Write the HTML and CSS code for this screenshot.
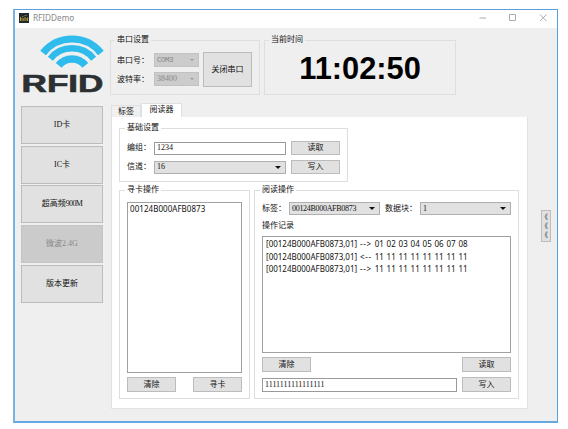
FILE: index.html
```html
<!DOCTYPE html>
<html lang="zh-CN">
<head>
<meta charset="utf-8">
<title>RFIDDemo</title>
<link rel="stylesheet" href="styles.css">
</head>
<body>
<div class="window">
  <header class="titlebar">
    <svg class="app-icon" width="10" height="10" viewBox="0 0 10 10"><rect width="10" height="10" fill="#24292c"/><path d="M1.5 8V4M3 8V5M6 8V4M8.5 8V4.5" stroke="#c9a727" stroke-width=".9"/><path d="M3 3.5h1.5M5.5 2.5h2M4.5 5v3M7.3 5v2.5" stroke="#7f8c78" stroke-width=".8"/></svg>
    <span class="caption">RFIDDemo</span>
    <svg class="controls" width="72" height="10" viewBox="0 0 72 10" fill="none" stroke="#aaa"><path d="M3.500 5H10M33.500 1.500h6v6h-6zM64 1.500l6.500 6.500M70.500 1.500L64 8"/></svg>
  </header>
  <div class="body">
    <aside class="sidebar">
      <svg class="logo" width="84" height="60" viewBox="20 34 84 60">
        <g fill="none" stroke="#2fbcec">
          <path d="M43.100 52.900A37 37 0 0 1 100.900 52.900" stroke-width="7.200"/>
          <path d="M50.400 58.700A27.700 27.700 0 0 1 93.600 58.700" stroke-width="6.500"/>
          <path d="M58.700 65.400A17 17 0 0 1 85.300 65.400" stroke-width="7.500"/>
        </g>
        <text x="21.500" y="91.700" textLength="82" lengthAdjust="spacingAndGlyphs">RFID</text>
      </svg>
      <nav class="menu">
        <button><span class="m">ID</span>卡</button>
        <button><span class="m">IC</span>卡</button>
        <button>超高频<span class="m tight">900M</span></button>
        <button class="active"><span>微波<span class="m">2.4G</span></span></button>
        <button>版本更新</button>
      </nav>
    </aside>
    <main class="content">
      <div class="top">
        <section class="group serial">
          <h2>串口设置</h2>
          <div class="serial-fields">
            <label>串口号：</label><div class="combo off"><span class="m mono">COM3</span><i></i></div>
            <label>波特率：</label><div class="combo off"><span class="m">38400</span><i></i></div>
          </div>
          <button class="close-port">关闭串口</button>
        </section>
        <section class="group clock">
          <h2>当前时间</h2>
          <time>11:02:50</time>
        </section>
      </div>
      <div class="tabs"><span class="tab">标签</span><span class="tab on">阅读器</span></div>
      <div class="page">
        <section class="group basic">
          <h2>基础设置</h2>
          <label>编组：</label><div class="input"><span class="m">1234</span></div><button>读取</button>
          <label>信道：</label><div class="combo"><span class="m">16</span><i></i></div><button>写入</button>
        </section>
        <div class="panels">
          <section class="group find">
            <h2>寻卡操作</h2>
            <div class="list"><p class="id">00124B000AFB0873</p></div>
            <div class="row"><button>清除</button><button>寻卡</button></div>
          </section>
          <section class="group reader">
            <h2>阅读操作</h2>
            <div class="pick">
              <label>标签：</label><div class="combo"><span class="m serial-id">00124B000AFB0873</span><i></i></div>
              <label>数据块：</label><div class="combo"><span class="m">1</span><i></i></div>
            </div>
            <h3>操作记录</h3>
            <div class="list log">
              <p>[00124B000AFB0873,01] <b>--&gt;</b> 01 02 03 04 05 06 07 08</p>
              <p>[00124B000AFB0873,01] <b>&lt;--</b> 11 11 11 11 11 11 11 11</p>
              <p>[00124B000AFB0873,01] <b>--&gt;</b> 11 11 11 11 11 11 11 11</p>
            </div>
            <div class="row"><button>清除</button><button>读取</button></div>
            <div class="send"><div class="input"><span class="m">1111111111111111</span></div><button>写入</button></div>
          </section>
        </div>
      </div>
    </main>
    <button class="expander"><span>《</span><span>《</span><span>《</span></button>
  </div>
</div>
</body>
</html>
```
FILE: styles.css
```css
* { box-sizing: border-box; }
body {
  margin: 0;
  padding: 9px 0 0 13px;
  background: #fff;
  color: #111;
  font: 8px/10px "Liberation Serif", "Noto Sans CJK SC", serif;
  overflow: hidden;
}
h2, h3, p { margin: 0; font-size: 8px; font-weight: 400; }
button {
  font: inherit;
  color: inherit;
  padding: 0;
  border: 1px solid #bcbcbc;
  background: #e1e1e1;
  white-space: nowrap;
}
label, .m { white-space: nowrap; }
.tight { letter-spacing: -.6px; }
.serial-id { letter-spacing: -.3px; }
.mono { font-family: "Liberation Mono", monospace; font-size: 7.500px; letter-spacing: -.5px; }

.window {
  width: 545px;
  height: 414px;
  border: 1px solid #5b9fdc;
  border-left: 2px solid #78b2e4;
  border-bottom: 2px solid #66a8df;
  background: #efefef;
}
.titlebar { display: flex; align-items: center; height: 18px; padding: 0 9px 2px 4px; background: #fff; }
.caption { margin-left: 4px; font: 8.200px/12px "Noto Sans", sans-serif; color: #888; }
.controls { margin-left: auto; }
.body { display: flex; align-items: flex-start; }
.sidebar { width: 96px; padding: 6px 0 0 5px; flex: none; }
.logo { display: block; overflow: visible; }
.logo text { font: bold 23px "Liberation Sans", sans-serif; fill: #2d3033; stroke: #2d3033; stroke-width: .6px; }
.menu { display: grid; grid-template-rows: repeat(5, 38px); row-gap: 1.700px; width: 82px; margin: 12px 0 0 1px; }
.menu .active { background: #cbcbcb; color: #888; border-color: #c3c3c3; }

.content { width: 417px; flex: none; }
.top { display: flex; gap: 4px; margin: 12px 0 0 -1px; }
.group { position: relative; border: 1px solid #dedede; }
.group h2 { position: absolute; top: -6px; left: 5px; padding: 0 2px; background: #fff; line-height: 10px; }
.top .group h2 { background: #efefef; left: 4px; }
.serial { width: 150px; height: 55px; display: flex; justify-content: space-between; padding: 11px 7px 0 6px; }
.serial-fields { display: grid; grid-template: 14px 14px / 37px 45px; row-gap: 5px; align-items: center; padding-top: 1px; }
.serial-fields label { padding-top: 1px; }
.close-port { width: 49px; height: 35px; }
.clock { width: 192px; height: 55px; text-align: center; }
.clock time { display: block; margin-top: 10px; font: bold 30.800px/36px "Liberation Sans", sans-serif; color: #000; }

.combo, .input { display: flex; align-items: center; height: 13px; padding: 0 4px 0 2px; border: 1px solid #b0b0b0; }
.combo { background: #e1e1e1; justify-content: space-between; }
.combo i { border: 3px solid transparent; border-top: 3px solid #111; border-bottom: 0; }
.combo.off { height: 14px; background: #ccc; border-color: #c2c2c2; color: #888; }
.combo.off i { border-width: 2.500px 2.500px 0; border-top-color: #999; }
.input { background: #fff; border-color: #9a9a9a; }

.tabs { display: flex; align-items: flex-end; height: 14px; margin-top: 8px; }
.tab { height: 12px; width: 30px; line-height: 11px; text-align: center; border: 1px solid #e0e0e0; border-bottom: 0; background: #f0f0f0; }
.tab.on { height: 14px; width: 41px; line-height: 12px; background: #fff; }
.page { height: 292px; padding: 11px 8px 0 7px; border: 1px solid #e2e2e2; border-top: 0; background: #fff; }
.basic {
  display: grid;
  grid-template: 14px 14px / 27px 132px 48px;
  row-gap: 5px;
  column-gap: 0;
  align-items: center;
  width: 229px;
  height: 54px;
  padding: 12px 0 0 7px;
}
.basic button, .row button, .send button { width: 49px; height: 15px; line-height: 13px; }
.basic button { margin-left: 5px; height: 14px; line-height: 12px; }
.panels { display: flex; gap: 4px; margin-top: 8px; }
.find { width: 132px; height: 209px; padding: 11px 7px 0; }
.list { border: 1px solid #a0a0a0; background: #fff; font: 8px/12.500px "Noto Sans", sans-serif; padding: 1px 3px; white-space: nowrap; }
.find .list { height: 171px; padding: 0 2px; }
.id { letter-spacing: .05px; }
.row { display: flex; justify-content: space-between; margin-top: 4px; }
.reader { width: 265px; height: 209px; padding: 11px 7px 0 7px; }
.pick { display: grid; grid-template-columns: 27px 91px 40px 91px; align-items: center; }
.pick label:nth-of-type(2) { padding-left: 5px; }
.reader h3 { line-height: 10px; margin: 6px 0 5px; }
.log { height: 117px; word-spacing: .75px; }
.log b { font-weight: 400; letter-spacing: .7px; }
.send { display: flex; justify-content: space-between; align-items: center; margin-top: 5px; }
.send .input { width: 195px; height: 14px; }
.expander { display: flex; flex-direction: column; align-items: center; justify-content: center; width: 10px; height: 32px; margin: 182px 0 0 13px; color: #222; }
.expander span { height: 9px; font-size: 7px; line-height: 9px; margin-left: -3px; }
```
